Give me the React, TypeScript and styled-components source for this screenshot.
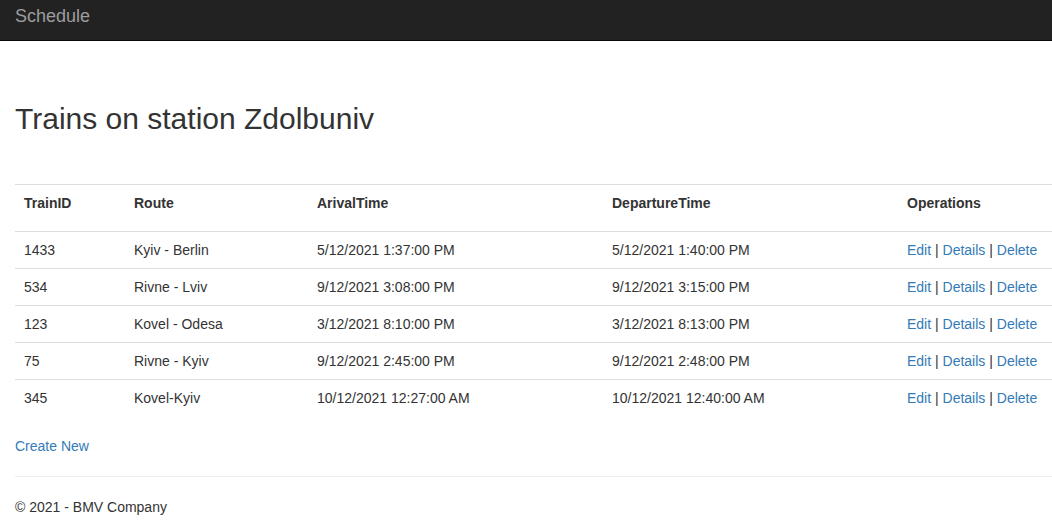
import React from "react";
import styled, { createGlobalStyle } from "styled-components";

const GlobalStyle = createGlobalStyle`
  html, body { margin: 0; padding: 0; background: #fff; }
  body {
    font-family: "Liberation Sans", Arial, sans-serif;
    font-size: 14px;
    line-height: 20px;
    color: #333;
    overflow-x: hidden;
  }
`;

const Navbar = styled.header`
  height: 40px;
  background: #222;
  border-bottom: 1px solid #080808;
  padding: 0 15px;
  display: flex;
  align-items: flex-start;
`;

const Brand = styled.a`
  font-size: 18px;
  line-height: 20px;
  padding-top: 6px;
  color: #9d9d9d;
  text-decoration: none;
`;

const Body = styled.main`
  padding: 0 0 0 15px;
  overflow: hidden;
`;

const Title = styled.h2`
  font-size: 30px;
  font-weight: 500;
  line-height: 33px;
  margin: 61px 0 49px;
  color: #333;
`;

const Table = styled.table`
  width: 1100px;
  table-layout: fixed;
  border-collapse: collapse;
  border-spacing: 0;
  margin-bottom: 20px;
`;

const Th = styled.th<{ $w: number }>`
  text-align: left;
  font-weight: bold;
  padding: 8px 8px 18px 9px;
  line-height: 20px;
  vertical-align: top;
  border-top: 1px solid #ddd;
  width: ${(p) => p.$w}px;
  box-sizing: border-box;
  white-space: nowrap;
`;

const Td = styled.td`
  padding: 8px 8px 8px 9px;
  line-height: 20px;
  vertical-align: top;
  border-top: 1px solid #ddd;
  white-space: nowrap;
`;

const Link = styled.a`
  color: #337ab7;
  text-decoration: none;
`;

const Para = styled.p`
  margin: 0 0 10px;
`;

const Rule = styled.hr`
  margin: 20px 0;
  border: 0;
  border-top: 1px solid #eee;
  height: 0;
`;

const Footer = styled.footer`
  p { margin: 0 0 10px; }
`;

const rows = [
  ["1433", "Kyiv - Berlin", "5/12/2021 1:37:00 PM", "5/12/2021 1:40:00 PM"],
  ["534", "Rivne - Lviv", "9/12/2021 3:08:00 PM", "9/12/2021 3:15:00 PM"],
  ["123", "Kovel - Odesa", "3/12/2021 8:10:00 PM", "3/12/2021 8:13:00 PM"],
  ["75", "Rivne - Kyiv", "9/12/2021 2:45:00 PM", "9/12/2021 2:48:00 PM"],
  ["345", "Kovel-Kyiv", "10/12/2021 12:27:00 AM", "10/12/2021 12:40:00 AM"],
];

export default function App() {
  return (
    <>
      <GlobalStyle />
      <Navbar>
        <Brand href="#">Schedule</Brand>
      </Navbar>
      <Body>
        <Title>Trains on station Zdolbuniv</Title>
        <Table>
          <tbody>
            <tr>
              <Th $w={110}>TrainID</Th>
              <Th $w={183}>Route</Th>
              <Th $w={295}>ArivalTime</Th>
              <Th $w={295}>DepartureTime</Th>
              <Th $w={217}>Operations</Th>
            </tr>
            {rows.map((r) => (
              <tr key={r[0]}>
                <Td>{r[0]}</Td>
                <Td>{r[1]}</Td>
                <Td>{r[2]}</Td>
                <Td>{r[3]}</Td>
                <Td>
                  <Link href="#">Edit</Link> | <Link href="#">Details</Link> |{" "}
                  <Link href="#">Delete</Link>
                </Td>
              </tr>
            ))}
          </tbody>
        </Table>
        <Para>
          <Link href="#">Create New</Link>
        </Para>
        <Rule />
        <Footer>
          <p>© 2021 - BMV Company</p>
        </Footer>
      </Body>
    </>
  );
}
